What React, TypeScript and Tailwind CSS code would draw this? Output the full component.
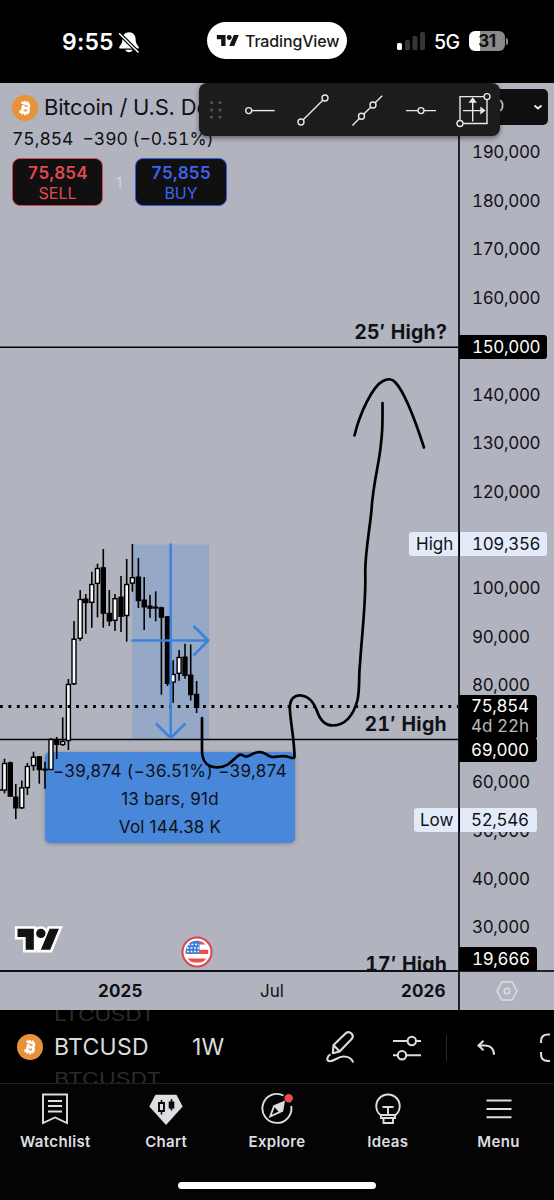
import type { ReactNode } from "react";

// [x, high, low, bodyTop, bodyBottom, filled]
type Candle = [number, number, number, number, number, boolean];

const candles: Candle[] = [
  [4.5, 758.7, 793.3, 763.3, 790.3, false],
  [10.3, 761.5, 796.3, 762.7, 796.3, true],
  [15.8, 784, 819, 797, 808, true],
  [21.8, 780.5, 809, 787.7, 808, false],
  [27.4, 763, 795, 766.3, 787.7, false],
  [33.5, 751.7, 770.7, 757, 765.7, false],
  [39.3, 756, 783.7, 756.7, 769.7, true],
  [45, 761.7, 788.7, 769, 770.2, true],
  [51, 738, 770, 739.3, 769.7, false],
  [56.7, 737, 759, 739.5, 744.5, true],
  [62.7, 717.3, 746, 741.3, 744.7, false],
  [68.4, 679, 750, 684.3, 740.7, false],
  [74, 621, 685, 639, 684, false],
  [80.2, 590, 640.7, 599.3, 638.5, false],
  [85.8, 594, 633.7, 599, 602.7, true],
  [91.8, 571.7, 627.7, 584.3, 602.5, false],
  [97.5, 563.7, 617.3, 568.3, 583.5, false],
  [103.3, 549, 627.7, 567.7, 613.3, true],
  [109.3, 590, 626, 613.3, 621, true],
  [115, 594, 631, 598.5, 620.5, false],
  [121, 576, 632, 597, 616.5, true],
  [126.7, 559, 641.7, 584.3, 615.7, false],
  [132.4, 544, 591.7, 577.5, 583.3, false],
  [138.4, 558, 608, 577, 600.7, true],
  [144.2, 577, 630, 600, 607, true],
  [150, 594.7, 617.7, 606, 608.3, true],
  [155.7, 591.3, 621.3, 607, 608.2, true],
  [161.4, 606.7, 694.7, 607.7, 617.3, true],
  [167.5, 616, 686, 616.7, 683.5, true],
  [173.2, 660.3, 702.7, 674.3, 682.3, false],
  [179.1, 650, 680.7, 657.3, 673.5, false],
  [185, 643.7, 678.7, 657, 675.5, true],
  [190.7, 644.5, 700.5, 675, 694.7, true],
  [196.6, 681, 713, 694.3, 707.5, true],
];

const prices = [
  "190,000", "180,000", "170,000", "160,000", "", "140,000", "130,000", "120,000", "",
  "100,000", "90,000", "80,000", "", "60,000", "50,000", "40,000", "30,000",
];

function TvMark({ className, outlined }: { className: string; outlined?: boolean }) {
  const shape = "M14 22H7V11H0V4h14v18zM28 22h-8l7.5-18h8L28 22z";
  return (
    <svg viewBox="-3 1 42 24" className={className}>
      {outlined && (
        <g fill="white" stroke="white" strokeWidth="4.500">
          <path d={shape} />
          <circle cx="20" cy="8" r="4" />
          <path d="M14 9h8l-3 12h-5z" />
        </g>
      )}
      <path d={shape} fill="#131313" />
      <circle cx="20" cy="8" r="4" fill="#131313" />
    </svg>
  );
}

function BitcoinIcon() {
  return (
    <svg viewBox="0 0 26 26" className="size-[26px] shrink-0">
      <circle cx="13" cy="13" r="13" fill="#e8923a" />
      <g transform="rotate(13 13 13)" fill="none" stroke="white" strokeWidth="2.700">
        <path d="M8.3 8.5h6a2.200 2.200 0 0 1 0 4.400h-3.600M8.300 17.600h6.400a2.350 2.350 0 0 0 0-4.700h-4M10.900 8.500v9" />
        <path d="M11.500 6v2.300M14.500 6v2.300M11.500 17.800v2.400M14.500 17.800v2.400" strokeWidth="1.700" />
      </g>
    </svg>
  );
}

function StatusBar() {
  return (
    <header className="relative flex h-[83px] items-start bg-black text-white">
      <div className="ml-[62px] mt-[28px] flex items-center">
        <span className="w-[54px] text-[23px] leading-[28px] font-semibold tracking-[0.2px]">9:55</span>
        <svg viewBox="0 0 22 24" className="ml-[2px] h-[24px] w-[22px]">
          <path
            d="M11 2.200c-4.300 0-6.500 3-6.600 6.500-.1 4.800-1.600 6.200-2.900 7.700-.7.900-.3 2.100.9 2.100h17.200c1.200 0 1.600-1.200.9-2.100-1.300-1.500-2.800-2.900-2.900-7.700-.1-3.500-2.300-6.500-6.600-6.500z"
            fill="white"
          />
          <path d="M7.300 19.800h7.400c-.6 3.300-6.800 3.300-7.400 0z" fill="white" />
          <path d="M1 3.200 20 22" stroke="black" strokeWidth="3.800" />
          <path d="M1.500 3.700 20 22" stroke="white" strokeWidth="1.500" strokeLinecap="round" />
        </svg>
      </div>
      <div className="ml-[67px] mt-[22px] flex h-[37px] w-[140px] items-center rounded-full bg-white text-[#181818]">
        <TvMark className="ml-[8px] h-[15px] w-[26px]" />
        <span className="ml-[4px] text-[16px] font-medium tracking-[-0.15px] whitespace-nowrap">TradingView</span>
      </div>
      <svg viewBox="0 0 28 18" className="mt-[32px] ml-[50px] h-[18px] w-[28px]">
        <rect x="0" y="11" width="5" height="7" rx="1.500" fill="white" />
        <rect x="8" y="8" width="5" height="10" rx="1.500" fill="#353535" />
        <rect x="15.500" y="4" width="5" height="14" rx="1.500" fill="#353535" />
        <rect x="23" y="0" width="5" height="18" rx="1.500" fill="#353535" />
      </svg>
      <span className="mt-[28px] ml-[9px] w-[27px] text-[19.500px] leading-[28px] font-medium tracking-[-0.5px]">5G</span>
      <div className="mt-[31px] ml-[8px] flex items-center">
        <div className="flex h-[20px] w-[36px] items-center justify-center rounded-[6px] bg-linear-to-r from-white from-31% to-[#8a8a8a] to-31% text-[17px] leading-[20px] font-bold tracking-[-0.3px] text-[#111]">
          31
        </div>
        <div className="ml-px h-[7px] w-[2px] rounded-r bg-[#8a8a8a]" />
      </div>
    </header>
  );
}

function PriceDrawing() {
  return (
    <svg viewBox="0 83 459 887" className="absolute top-0 left-0 h-[887px] w-[459px]">
      <rect x="132" y="544.500" width="77" height="195" fill="#4a88d9" fillOpacity="0.27" />
      <path d="M0 347.200h459M0 739.500h459" stroke="black" strokeWidth="1.500" />
      <g stroke="black" fill="white">
        <path d="M0 790h2" strokeWidth="1.300" />
        {candles.map(([x, high, low, top, bottom, filled]) => (
          <g key={x}>
            <path d={`M${x} ${high}V${low}`} strokeWidth="1.600" />
            <rect
              x={x - 2}
              y={top + 0.2}
              width="4"
              height={Math.max(bottom - top - 0.4, 0.2)}
              strokeWidth="1.400"
              fill={filled ? "black" : "#f8f8fa"}
            />
          </g>
        ))}
      </g>
      <path d="M0 706.500h459" stroke="black" strokeWidth="2.800" strokeDasharray="2.800 5.660" />
      <g fill="none" stroke="#3d82dc" strokeWidth="2.500" strokeLinejoin="round">
        <path d="M170.700 543.500V738M156 723.500l14.700 14.500 14.700-14.500" />
        <path d="M131.500 640.500H208M193.500 626l14.800 14.500-14.800 15" />
      </g>
    </svg>
  );
}

function Projection() {
  return (
    <svg viewBox="0 83 459 887" className="pointer-events-none absolute top-0 left-0 h-[887px] w-[459px]">
      <g fill="none" stroke="black" strokeWidth="2.700" strokeLinecap="round" strokeLinejoin="round">
        <path d="M202 718V750C202 761 206 767 217 767.300C230 767.500 233 758 240 754.500C243 754.500 244 757 247 756.500C253 754 255 752 260 752C266 752.500 267 756 272 757C277 757.300 282 755 287 756.500C291 758 294 758.700 294.500 757C294.500 740 290.300 722 289.800 708C290 698 295 695 301 695.500C309 696 314 703 317 711C320 720 325 725.500 333 725.500C347 725 354 713 357.500 700C360 689 358.500 677 360 664C362 633 366 602 365.300 575C364.700 555 369 535 371.500 510C373 483 380 460 381 443C383 430 382.500 418 382.500 403" />
        <path d="M354.500 435.500C360 412 373 386 383 381C387 378.600 392 378.600 395 382C406 393 418 429 424 447.500" />
      </g>
    </svg>
  );
}

function AxisTag({ className, children }: { className: string; children: ReactNode }) {
  return (
    <div className={`absolute left-[459px] text-[17px] leading-[24px] tracking-[-0.35px] whitespace-nowrap tabular-nums ${className}`}>
      {children}
    </div>
  );
}

function DrawingToolbar() {
  return (
    <div className="absolute top-0 left-[199px] flex h-[53px] w-[301px] rounded-[8px] bg-[#1c1c1c] shadow-[0_2px_5px_#0007]">
      <svg viewBox="199 83 301 53" className="h-[53px] w-[301px]" fill="none" stroke="#e8e8e8" strokeWidth="1.400">
        <g fill="#555" stroke="none">
          {[102.5, 110, 117].map((y) => (
            <g key={y}>
              <circle cx="211.500" cy={y} r="1.500" />
              <circle cx="220" cy={y} r="1.500" />
            </g>
          ))}
        </g>
        <circle cx="248.700" cy="110.600" r="3" />
        <path d="M251.700 110.600h23" />
        <circle cx="301" cy="122" r="3" />
        <circle cx="325" cy="98" r="3" />
        <path d="m303.200 119.800 19.600-19.600" />
        <circle cx="361.500" cy="116.200" r="3" />
        <circle cx="373" cy="105" r="3" />
        <path d="m352.500 125.500 6.800-7M363.800 114l7-6.800M375.200 102.800l7-7" />
        <circle cx="421" cy="110.600" r="3" />
        <path d="M406 110.600h12M424 110.600h12" />
        <path d="M483.700 96.600H460v23.700M463.200 123.500H487V99.800" />
        <circle cx="487" cy="96.600" r="3" />
        <circle cx="460" cy="123.500" r="3" />
        <path d="M472.700 121.500V101M463 110.600h20" />
        <path d="m470 102 2.700-3.500 2.700 3.500zM481 108v5.200l3.500-2.600z" fill="#e8e8e8" />
      </svg>
    </div>
  );
}

function FlagBadge() {
  return (
    <svg viewBox="0 0 32 32" className="absolute top-[853px] left-[180.500px] size-[32px]">
      <circle cx="16" cy="16" r="14.500" fill="white" stroke="#dc4449" strokeWidth="2" />
      <clipPath id="flag">
        <circle cx="16" cy="16" r="11.300" />
      </clipPath>
      <g clipPath="url(#flag)">
        <path d="M4 6.500h24M4 15.800h24M4 24.500h24" stroke="#e5524f" strokeWidth="4.200" />
        <path d="M4 4h14.500v13.500H4z" fill="#3c7fdb" />
        <path d="M7 8.500h11M6 12h12M6 15.500h12" stroke="white" strokeWidth="1.400" strokeDasharray="1.800 1.700" />
      </g>
    </svg>
  );
}

function ChartArea() {
  return (
    <main className="relative grid h-[927px] grid-cols-[458px_96px] grid-rows-[887px_40px] overflow-hidden bg-[#b1b4be] text-[#101116]">
      <section className="relative overflow-hidden">
        {/* measure label sits under the candles */}
        <div className="absolute top-[669px] left-[45px] flex h-[91px] w-[250px] flex-col items-center rounded-[5px] bg-[#4887d9] pt-[5px] text-[17px] leading-[28px] whitespace-nowrap shadow-[0_1px_4px_#0004]">
          <span className="tracking-[0.38px]">−39,874 (−36.51%) −39,874</span>
          <span className="tracking-[0.2px]">13 bars, 91d</span>
          <span className="tracking-[0.2px]">Vol 144.38 K</span>
        </div>
        <PriceDrawing />
        <Projection />
        <div className="relative pl-[12px]">
          <div className="flex h-[49px] items-center gap-[6px] text-[22px] whitespace-nowrap">
            <BitcoinIcon />
            <span className="tracking-[-0.2px]">Bitcoin / U.S. Dollar</span>
          </div>
          <div className="-mt-[5px] flex h-[24px] items-center gap-[9px] text-[17.500px] whitespace-nowrap tabular-nums">
            <span>75,854</span>
            <span>−390 (−0.51%)</span>
          </div>
          <div className="mt-[7px] flex items-center text-center">
            <div className="flex h-[48px] w-[91px] flex-col rounded-[8px] border-[1.500px] border-[#d94850] bg-[#101010] text-[#e14b50]">
              <span className="mt-[3px] text-[17px] leading-[22px] font-semibold tracking-[0.1px] tabular-nums">75,854</span>
              <span className="text-[16px] leading-[18px]">SELL</span>
            </div>
            <span className="w-[32px] text-[14px] text-[#d4d6de]">1</span>
            <div className="flex h-[48px] w-[92px] flex-col rounded-[8px] border-[1.500px] border-[#3757e3] bg-[#101010] text-[#3f64ee]">
              <span className="mt-[3px] text-[17px] leading-[22px] font-semibold tracking-[0.1px] tabular-nums">75,855</span>
              <span className="text-[16px] leading-[18px]">BUY</span>
            </div>
          </div>
        </div>

        <b className="absolute top-[236px] right-[11px] text-[19.500px] leading-[26px] font-bold tracking-[0.2px] tabular-nums">25′ High?</b>
        <b className="absolute top-[628px] right-[11px] text-[19.500px] leading-[26px] font-bold tracking-[0.3px] tabular-nums">21′ High</b>
        <b className="absolute top-[868px] right-[11px] text-[19.500px] leading-[26px] font-bold tracking-[0.2px] tabular-nums">17′ High</b>
        <TvMark outlined className="absolute top-[842px] left-[13.500px] h-[28.500px] w-[49px]" />
        <FlagBadge />
      </section>

      <aside className="border-l-2 border-[#22232a] pt-[46px] pl-[12px] text-[17px] tracking-[-0.35px] tabular-nums">
        {prices.map((price, i) => (
          <div key={i} className="flex h-[48.440px] items-center">{price}</div>
        ))}
      </aside>

      <div className="flex items-center border-t-2 border-[#101116] pt-[2px] text-[17px]">
        <b className="ml-[98px] w-[45px] font-bold tracking-[0.2px]">2025</b>
        <span className="ml-[117px] w-[25px]">Jul</span>
        <b className="ml-[116px] font-bold tracking-[0.2px]">2026</b>
      </div>
      <div className="flex items-center justify-center border-t-2 border-l-2 border-[#22232a]">
        <svg viewBox="0 0 22 20" className="h-[20px] w-[22px]" fill="none" stroke="#dcdee5" strokeWidth="1.500">
          <path d="M6 1h10l5 9-5 9H6l-5-9z" />
          <circle cx="11" cy="10" r="2.800" />
        </svg>
      </div>

      <div className="absolute top-[6px] right-[6px] flex h-[36px] w-[80px] items-center justify-between rounded-[5px] bg-[#101010] pr-[5px] pl-[30px] text-[17px] text-[#ddd]">
        <span className="-ml-[6px]">D</span>
        <svg viewBox="0 0 10 10" className="size-[10px]" fill="none" stroke="#eee" strokeWidth="1.800">
          <path d="m1.500 3.500 3.500 3 3.500-3" />
        </svg>
      </div>
      <AxisTag className="top-[252px] h-[24px] w-[88px] rounded-r-[3px] bg-black pl-[13px] text-white">150,000</AxisTag>
      <div className="absolute top-[449px] left-[409px] h-[24px] w-[49px] rounded-l-[3px] bg-[#e3ebfa] pl-[7px] text-[17px] leading-[24px]">High</div>
      <AxisTag className="top-[449px] h-[24px] w-[88px] rounded-r-[3px] border-l border-black bg-[#e3ebfa] pl-[12px]">109,356</AxisTag>
      <AxisTag className="top-[612px] h-[44px] w-[78px] rounded-r-[3px] bg-black pl-[12px] text-white">
        <div className="leading-[22px]">75,854</div>
        <div className="leading-[18px] tracking-normal text-[#b9b9bd]">4d 22h</div>
      </AxisTag>
      <AxisTag className="top-[655px] h-[24px] w-[78px] rounded-r-[3px] bg-black pl-[12px] text-white">69,000</AxisTag>
      <div className="absolute top-[725px] left-[414px] h-[24px] w-[44px] rounded-l-[3px] bg-[#e3ebfa] pl-[6px] text-[17px] leading-[24px]">Low</div>
      <AxisTag className="top-[725px] h-[24px] w-[78px] rounded-r-[3px] border-l border-black bg-[#e3ebfa] pl-[11px]">52,546</AxisTag>
      <AxisTag className="top-[864px] h-[24px] w-[78px] rounded-tr-[3px] bg-black pl-[13px] text-white">19,666</AxisTag>
      <DrawingToolbar />
    </main>
  );
}

function SymbolBar() {
  return (
    <section className="flex h-[74px] items-center overflow-hidden border-b border-[#232323] bg-black text-[#dcdcdc]">
      <div className="ml-[17px]">
        <BitcoinIcon />
      </div>
      <div className="ml-[11px] flex w-[138px] flex-col text-[23px] leading-[32px]">
        <span className="origin-left scale-y-75 tracking-[-0.5px] text-[#2b2b2b]">LTCUSDT</span>
        <span className="tracking-[0.3px]">BTCUSD</span>
        <span className="origin-left scale-y-75 text-[#2b2b2b]">BTCUSDT</span>
      </div>
      <span className="w-[36px] pt-[2px] text-[23px] tracking-[0.2px]">1W</span>
      <svg viewBox="320 1020 234 52" className="ml-[92px] h-[52px] w-[234px] shrink-0" fill="none" stroke="#dcdcdc" strokeWidth="2.100">
        <path
          d="M332.800 1052.300l.7-8.300 12.300-11.800c1.800-1.600 4-1.300 5.600.3 1.700 1.700 1.800 3.800.2 5.500l-12 12.500zM333.500 1044l6.100 6.500"
          strokeLinejoin="round"
        />
        <path d="M330.500 1053.500c-3.200 1.200-4.800 6.300-1 6.700 4.500.4 8.500-4.700 14-4.700 5 0 8.500 2.500 9.800 6" />
        <path d="M393 1040h14.500M416 1040h5M393 1054.200h4.500M406 1054.200h15" />
        <circle cx="411.800" cy="1040" r="4.200" />
        <circle cx="402" cy="1054.200" r="4.200" />
        <path d="M446.500 1034v26" stroke="#292929" strokeWidth="1" />
        <path d="m483.500 1039.700-5 4.800 5 4.800M478.500 1044.500h6c6 0 9.500 3.500 9.500 9.300" />
        <path d="M550 1033.500h-2c-5 0-7 2-7 7v1.500M541 1051v2c0 5 2 7 7 7h2" />
      </svg>
    </section>
  );
}

const tabs: { label: string; icon: ReactNode }[] = [
  {
    label: "Watchlist",
    icon: (
      <>
        <path d="M5 2.500h24v28.500l-12-5.500-12 5.500z" />
        <path d="M10 9h14M10 14h14M10 19.500h14" />
      </>
    ),
  },
  {
    label: "Chart",
    icon: (
      <>
        <path d="M6.500 2.800h21l6.200 11.700L17 33 .3 14.500z" fill="#dedee2" stroke="none" />
        <path d="M12.500 8v3M12.500 19v3.500M22.500 7v11.500" stroke="#080808" strokeWidth="1.600" />
        <path d="M10 11h5v8h-5z" stroke="#080808" />
        <path d="M19.700 9.500h5.600v7h-5.600z" fill="#080808" stroke="none" />
      </>
    ),
  },
  {
    label: "Explore",
    icon: (
      <>
        <path d="M23.500 3.500A14.500 14.500 0 1 0 31.200 14" />
        <path d="m10.200 24.500 3.800-10.300L23.800 10l-1.500 8.800z" />
        <path d="m14 14.500 9.800-4.500-1.500 8.800-3.300 1.500z" fill="#dedee2" stroke="none" />
        <circle cx="28.700" cy="6.300" r="4.200" fill="#e84b50" stroke="none" />
      </>
    ),
  },
  {
    label: "Ideas",
    icon: (
      <>
        <path d="M10 23.500a11.700 11.700 0 1 1 14 0v2.500H10z" />
        <path d="M12.500 26h9.500v5h-9.500zM11.500 15h11M17 15v8M10 23h14" />
      </>
    ),
  },
  {
    label: "Menu",
    icon: <path d="M4.500 8.500h25M4.500 17h25M4.500 25.300h25" />,
  },
];

function TabBar() {
  return (
    <nav className="flex h-[116px] flex-col bg-[#040404] text-[#dedee2]">
      <div className="grid grid-cols-5 pt-[8px]">
        {tabs.map((tab) => (
          <a key={tab.label} href="#" className="flex flex-col items-center">
            <svg viewBox="0 0 34 34" className="size-[34px]" fill="none" stroke="#dedee2" strokeWidth="1.900">
              {tab.icon}
            </svg>
            <span className="mt-[5px] text-[15px] leading-[22px] font-semibold tracking-[0.35px]">{tab.label}</span>
          </a>
        ))}
      </div>
      <div className="mx-auto mt-auto mb-[11px] h-[7px] w-[198px] rounded-full bg-white" />
    </nav>
  );
}

export default function App() {
  return (
    <div className="w-[554px] bg-black font-['Inter',sans-serif]">
      <StatusBar />
      <ChartArea />
      <SymbolBar />
      <TabBar />
    </div>
  );
}
